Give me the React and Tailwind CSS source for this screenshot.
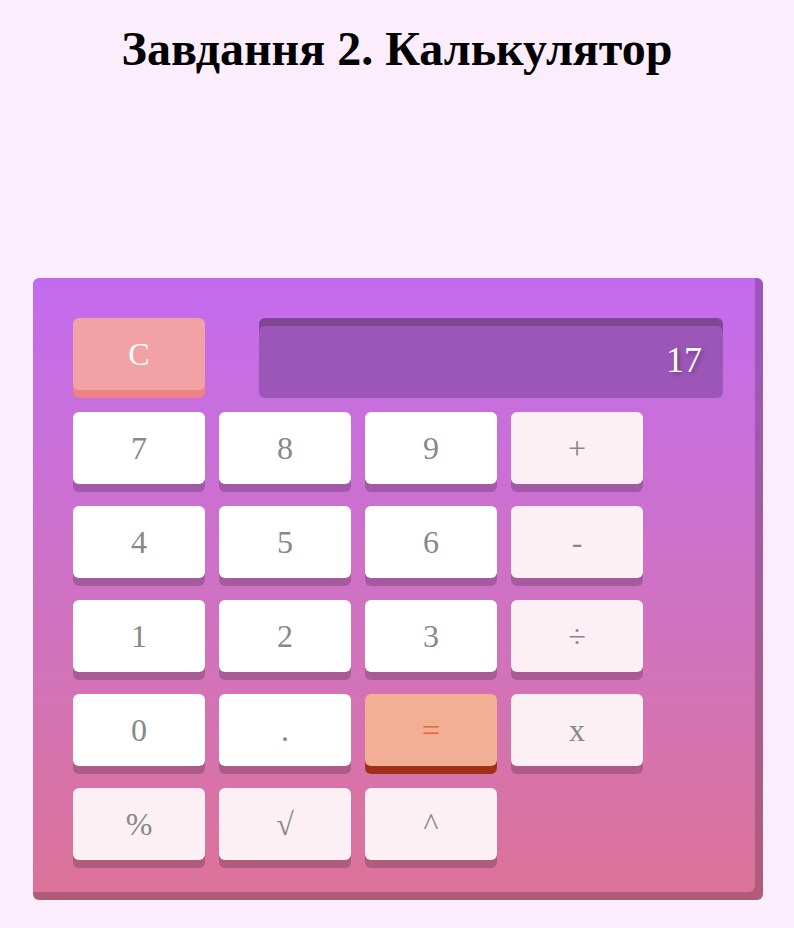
import React, { useState } from "react";

const rows = [
  [
    { label: "7", kind: "num" },
    { label: "8", kind: "num" },
    { label: "9", kind: "num" },
    { label: "+", kind: "op" },
  ],
  [
    { label: "4", kind: "num" },
    { label: "5", kind: "num" },
    { label: "6", kind: "num" },
    { label: "-", kind: "op" },
  ],
  [
    { label: "1", kind: "num" },
    { label: "2", kind: "num" },
    { label: "3", kind: "num" },
    { label: "÷", kind: "op" },
  ],
  [
    { label: "0", kind: "num" },
    { label: ".", kind: "num" },
    { label: "=", kind: "eq" },
    { label: "x", kind: "op" },
  ],
  [
    { label: "%", kind: "op" },
    { label: "√", kind: "op" },
    { label: "^", kind: "op" },
  ],
];

const kindClass = {
  num: "bg-white text-[#888888] shadow-[0_8px_0_rgba(0,0,0,0.2)]",
  op: "bg-[#fcf0f5] text-[#888888] shadow-[0_8px_0_rgba(0,0,0,0.2)]",
  eq: "bg-[#f2af94] text-[#e5643a] shadow-[0_8px_0_#a02f17]",
};

function Key({ label, kind }) {
  return (
    <button
      className={`w-[132px] h-[72px] rounded-md text-[32px] leading-none flex items-center justify-center ${kindClass[kind]}`}
    >
      {label}
    </button>
  );
}

export default function App() {
  const [value] = useState("17");

  return (
    <div className="min-h-screen bg-[#fbedfc] font-['Liberation_Serif',serif] pb-7">
      <h1 className="text-center text-[48px] font-bold text-black pt-[22px] leading-[53px]">
        Завдання 2. Калькулятор
      </h1>

      {/* Calculator */}
      <div className="ml-[33px] mt-[203px] w-[730px] rounded-md pt-10 px-10 pb-8 bg-gradient-to-b from-[#c36bef] to-[#dc7397] shadow-[inset_-8px_-8px_0_rgba(0,0,0,0.2)]">
        <div className="flex flex-col gap-[14px]">
          <div className="flex h-[80px]">
            <button className="w-[132px] h-[72px] rounded-md bg-[#f2a1a5] text-white text-[32px] leading-none flex items-center justify-center shadow-[0_8px_0_#ee8387]">
              C
            </button>
            <div className="ml-[54px] flex-1 h-[80px] rounded-md bg-[#9c56b8] shadow-[inset_0_8px_0_rgba(0,0,0,0.18)] flex items-center justify-end pr-[21px] pt-1 text-white text-[36px] [text-shadow:2px_2px_4px_rgba(0,0,0,0.3)]">
              {value}
            </div>
          </div>
          {rows.map((row, i) => (
            <div key={i} className="flex gap-[14px] h-[80px]">
              {row.map((k) => (
                <Key key={k.label} {...k} />
              ))}
            </div>
          ))}
        </div>
      </div>
    </div>
  );
}
